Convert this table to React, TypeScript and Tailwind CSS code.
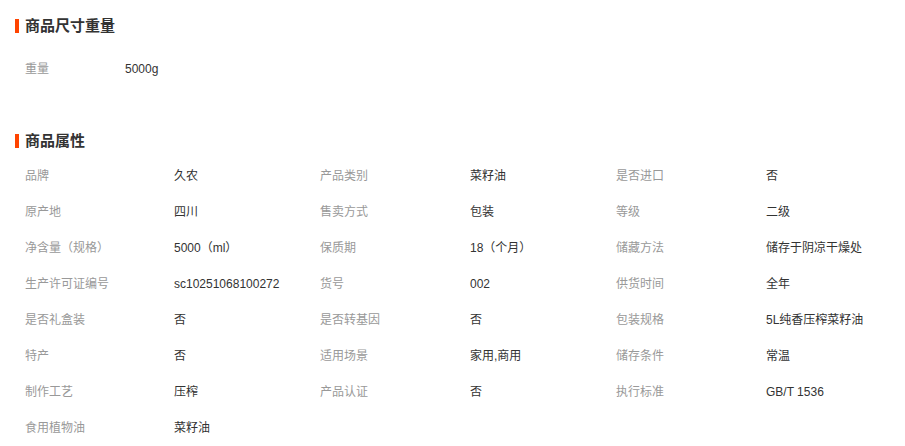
const font = {
  fontFamily: '"Liberation Sans", "Noto Sans CJK SC", sans-serif',
};

const sizeRows = [["重量", "5000g"]];

const attrs: [string, string][] = [
  ["品牌", "久农"],
  ["产品类别", "菜籽油"],
  ["是否进口", "否"],
  ["原产地", "四川"],
  ["售卖方式", "包装"],
  ["等级", "二级"],
  ["净含量（规格）", "5000（ml）"],
  ["保质期", "18（个月）"],
  ["储藏方法", "储存于阴凉干燥处"],
  ["生产许可证编号", "sc10251068100272"],
  ["货号", "002"],
  ["供货时间", "全年"],
  ["是否礼盒装", "否"],
  ["是否转基因", "否"],
  ["包装规格", "5L纯香压榨菜籽油"],
  ["特产", "否"],
  ["适用场景", "家用,商用"],
  ["储存条件", "常温"],
  ["制作工艺", "压榨"],
  ["产品认证", "否"],
  ["执行标准", "GB/T 1536"],
  ["食用植物油", "菜籽油"],
];

function Title({ text }: { text: string }) {
  return (
    <div className="flex items-center h-5 pl-[15px]">
      <span className="w-1 h-[14px] bg-[#ff4400]" />
      <span className="ml-[6px] text-[15px] font-bold text-[#333]">{text}</span>
    </div>
  );
}

export default function App() {
  return (
    <div className="w-[905px] h-[446px] bg-white overflow-hidden pt-4" style={font}>
      <Title text="商品尺寸重量" />
      <div className="mt-[15px] pl-[25px]">
        {sizeRows.map(([k, v]) => (
          <div key={k} className="flex h-9 items-center text-xs">
            <span className="w-[100px] text-[#999]">{k}</span>
            <span className="text-[#333]">{v}</span>
          </div>
        ))}
      </div>

      <div className="mt-[44px]">
        <Title text="商品属性" />
      </div>
      <div className="mt-[7px] pl-[25px] grid grid-cols-[149px_146px_150px_146px_150px_1fr]">
        {attrs.map(([k, v]) => (
          <div key={k} className="contents">
            <div className="h-9 flex items-center text-xs text-[#999]">{k}</div>
            <div className="h-9 flex items-center text-xs text-[#333]">{v}</div>
          </div>
        ))}
      </div>
    </div>
  );
}
